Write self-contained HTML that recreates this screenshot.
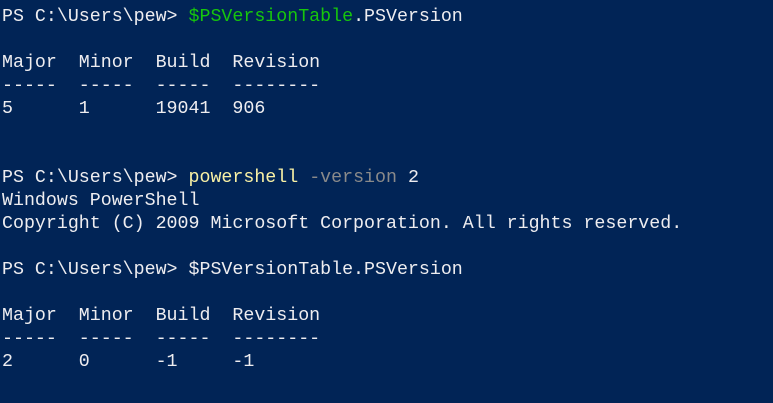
<!DOCTYPE html>
<html><head><style>
html,body{margin:0;padding:0;background:#012456;width:773px;height:403px;overflow:hidden}
pre{margin:0;position:absolute;left:2px;top:6px;font-family:"Liberation Mono",monospace;font-size:18.3px;line-height:23px;color:#eeedf0}
.g{color:#16c60c}.y{color:#f9f1a5}.d{color:#8a8a8a}
</style></head><body>
<pre>PS C:\Users\pew> <span class="g">$PSVersionTable</span>.PSVersion

Major  Minor  Build  Revision
-----  -----  -----  --------
5      1      19041  906


PS C:\Users\pew> <span class="y">powershell</span> <span class="d">-version</span> 2
Windows PowerShell
Copyright (C) 2009 Microsoft Corporation. All rights reserved.

PS C:\Users\pew> $PSVersionTable.PSVersion

Major  Minor  Build  Revision
-----  -----  -----  --------
2      0      -1     -1
</pre>
</body></html>
